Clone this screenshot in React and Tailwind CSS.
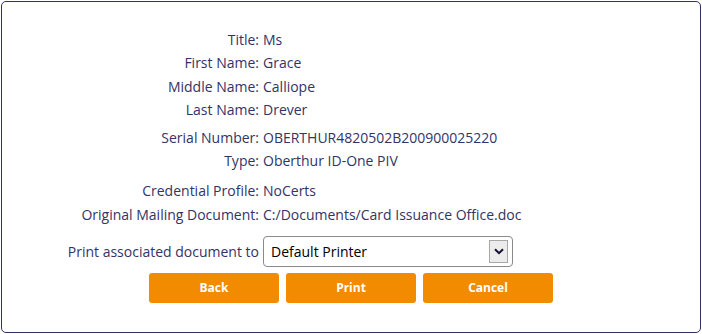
import React from "react";

const groups = [
  [
    ["Title:", "Ms"],
    ["First Name:", "Grace"],
    ["Middle Name:", "Calliope"],
    ["Last Name:", "Drever"],
  ],
  [
    ["Serial Number:", "OBERTHUR4820502B200900025220"],
    ["Type:", "Oberthur ID-One PIV"],
  ],
  [
    ["Credential Profile:", "NoCerts"],
    ["Original Mailing Document:", "C:/Documents/Card Issuance Office.doc"],
  ],
];

export default function App() {
  return (
    <div className="w-[702px] h-[334px] bg-white p-px font-['Open_Sans',sans-serif]">
      <div className="h-[332px] w-[700px] border border-[#332f6a] rounded-[5px] text-[14px] text-[#333366] pt-[26px]">
        <div className="flex flex-col gap-[4px]">
          {groups.map((group, gi) => (
            <div key={gi} className={gi === 2 ? "mt-[3px]" : ""}>
              {group.map(([label, value]) => (
                <div key={label} className="grid grid-cols-[257px_1fr] gap-x-[4px] leading-[23.4px]">
                  <span className="text-right">{label}</span>
                  <span>{value}</span>
                </div>
              ))}
            </div>
          ))}
        </div>

        <div className="grid grid-cols-[257px_1fr] gap-x-[4px] items-center mt-[10px]">
          <span className="text-right">Print associated document to</span>
          <div className="w-[250px] h-[31px] border border-[#8a8a8a] rounded-[4px] flex items-center justify-between pl-[7px] pr-[4px] text-black">
            <span>Default Printer</span>
            <div className="w-[19px] h-[23px] bg-[#ececec] border border-[#a8a8a8] flex items-center justify-center">
              <svg width="10" height="7" viewBox="0 0 10 7">
                <path d="M1 1.2 L5 5.2 L9 1.2" fill="none" stroke="#111133" strokeWidth="2" />
              </svg>
            </div>
          </div>
        </div>

        <div className="flex justify-center gap-[7px] mt-[6px]">
          {["Back", "Print", "Cancel"].map((b) => (
            <button
              key={b}
              className="w-[130px] h-[30px] rounded-[3px] bg-[#f28b00] text-white text-[12px] font-bold"
            >
              {b}
            </button>
          ))}
        </div>
      </div>
    </div>
  );
}
